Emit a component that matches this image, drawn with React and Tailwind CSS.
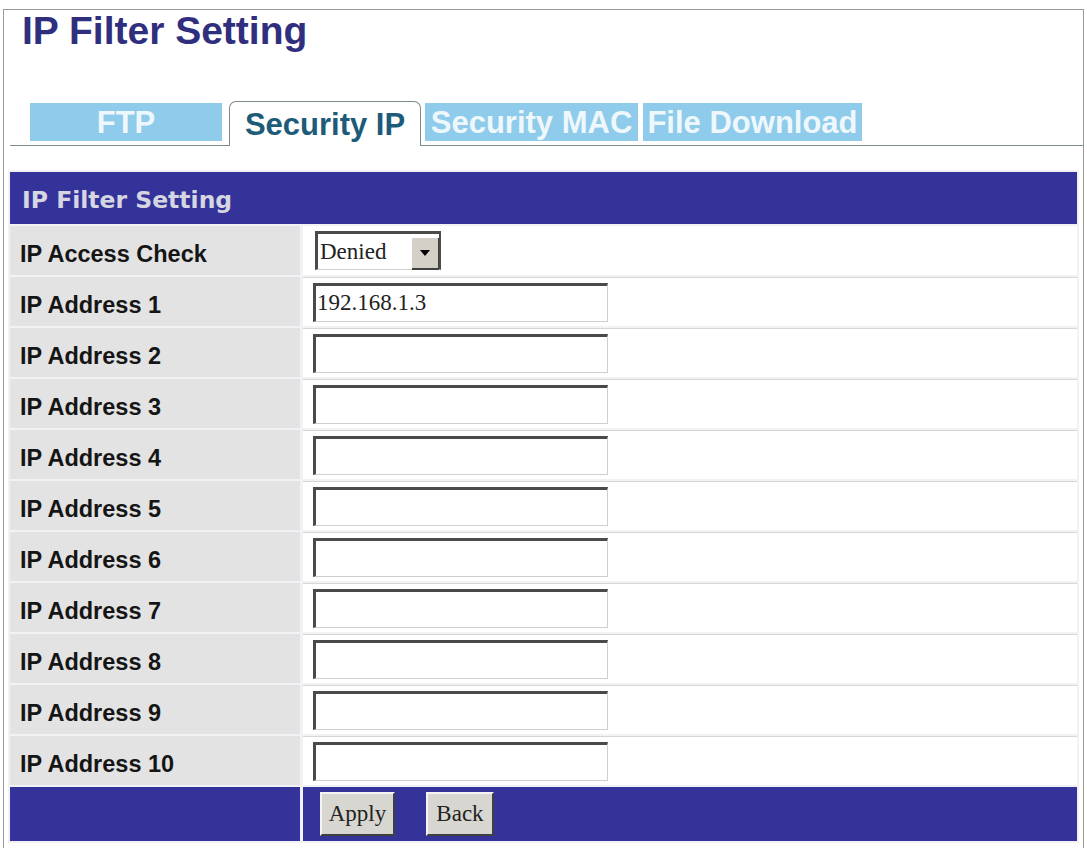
import React from 'react';

const addresses = [
  { label: 'IP Address 1', value: '192.168.1.3' },
  { label: 'IP Address 2', value: '' },
  { label: 'IP Address 3', value: '' },
  { label: 'IP Address 4', value: '' },
  { label: 'IP Address 5', value: '' },
  { label: 'IP Address 6', value: '' },
  { label: 'IP Address 7', value: '' },
  { label: 'IP Address 8', value: '' },
  { label: 'IP Address 9', value: '' },
  { label: 'IP Address 10', value: '' },
];

function Tab({ label, width, active }) {
  if (active) {
    return (
      <div
        className={`${width} -mb-px flex h-[45px] items-center justify-center rounded-t-[7px] border-l border-r border-t border-[#7c8a8a] bg-white text-[31px] font-bold leading-none text-[#1d5b78]`}
      >
        {label}
      </div>
    );
  }
  return (
    <div
      className={`${width} mb-[4px] flex h-[38px] items-center justify-center bg-[#8fcbea] text-[31px] font-bold leading-none text-[#eef8fc]`}
    >
      {label}
    </div>
  );
}

function TextBox({ value }) {
  return (
    <div className="flex h-[39px] w-[295px] items-center border-b border-l-[3px] border-r border-t-[3px] border-b-[#cfcfcf] border-l-[#4a4a4a] border-r-[#cfcfcf] border-t-[#4a4a4a] bg-white pl-[1px] font-['Liberation_Serif',serif] text-[23px] text-[#222]">
      {value}
    </div>
  );
}

function SelectBox() {
  return (
    <div className="flex h-[39px] w-[126px] items-center border-b border-l-[3px] border-r-[2px] border-t-[3px] border-b-[#cfcfcf] border-l-[#4a4a4a] border-r-[#4a4a4a] border-t-[#4a4a4a] bg-white">
      <span className="flex-1 pl-[2px] font-['Liberation_Serif',serif] text-[23px] leading-none text-[#222]">Denied</span>
      <span className="mb-[-1px] flex h-[32px] w-[27px] items-center justify-center self-end border-b-[2px] border-r border-b-[#404040] border-r-[#404040] bg-[#d4d0c8]">
        <svg width="10" height="6" viewBox="0 0 10 6">
          <path d="M0 0 H10 L5 6 Z" fill="#000" />
        </svg>
      </span>
    </div>
  );
}

function Button({ children, width }) {
  return (
    <div
      className={`${width} flex h-[44px] items-center justify-center border-2 border-b-[#404040] border-l-[#f4f4f4] border-r-[#404040] border-t-[#f4f4f4] bg-[#d8d6d0] font-['Liberation_Serif',serif] text-[23px] text-[#222]`}
    >
      {children}
    </div>
  );
}

export default function App() {
  return (
    <div className="min-h-screen bg-white pl-[3px] pt-[9px] font-['Liberation_Sans',Arial,sans-serif]">
      <div className="h-[839px] w-[1081px] border-l border-r border-t border-[#9a9a9a] bg-white">
        <h1 className="pl-[18px] pt-[2px] text-[39px] font-bold leading-[38px] text-[#2f2f7e]">IP Filter Setting</h1>

        <div className="ml-[6px] mt-[51px] flex h-[45px] items-end border-b border-[#7c8a8a] pl-[20px]">
          <Tab label="FTP" width="w-[192px]" />
          <div className="w-[7px]" />
          <Tab label="Security IP" width="w-[192px]" active />
          <div className="w-[4px]" />
          <Tab label="Security MAC" width="w-[213px]" />
          <div className="w-[5px]" />
          <Tab label="File Download" width="w-[219px]" />
        </div>

        <div className="ml-[4px] mt-[24px] grid w-[1071px] grid-cols-[290px_1fr] gap-x-[3px] gap-y-[2px] bg-[#f2f2f6] p-[2px]">
          <div className="col-span-2 flex h-[52px] items-center bg-[#333399] pl-[12px] pt-[6px] font-['DejaVu_Sans',Verdana,sans-serif] text-[23.5px] font-bold text-[#d6d6e2]">
            IP Filter Setting
          </div>

          <div className="flex h-[49px] items-center bg-[#e3e3e3] pl-[10px] pt-[8px] text-[23.5px] font-bold text-[#151515]">IP Access Check</div>
          <div className="flex h-[49px] items-center bg-white pl-[12px]">
            <SelectBox />
          </div>

          {addresses.map((a) => (
            <React.Fragment key={a.label}>
              <div className="flex h-[49px] items-center bg-[#e3e3e3] pl-[10px] pt-[8px] text-[23.5px] font-bold text-[#151515]">{a.label}</div>
              <div className="flex h-[49px] items-center border-t border-[#d6d6d6] bg-white pl-[10px]">
                <TextBox value={a.value} />
              </div>
            </React.Fragment>
          ))}

          <div className="h-[54px] bg-[#333399]" />
          <div className="flex h-[54px] items-center gap-[31px] bg-[#333399] pl-[17px]">
            <Button width="w-[75px]">Apply</Button>
            <Button width="w-[68px]">Back</Button>
          </div>
        </div>
      </div>
    </div>
  );
}
